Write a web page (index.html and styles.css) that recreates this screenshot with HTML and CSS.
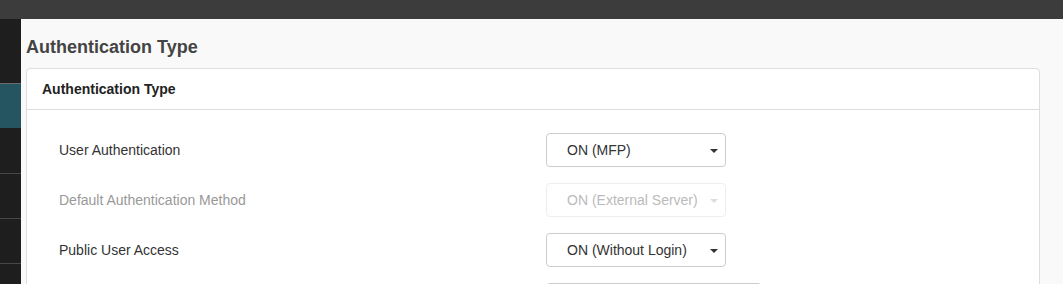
FILE: index.html
```html
<!DOCTYPE html>
<html lang="en">

<head>
    <meta charset="UTF-8">
    <title>Authentication Type</title>
    <link rel="stylesheet" href="styles.css">
</head>

<body>
    <header class="top-bar"></header>
    <div class="layout">
        <nav class="side-nav">
            <div class="nav-item active"></div>
            <div class="nav-item"></div>
            <div class="nav-item"></div>
            <div class="nav-item"></div>
            <div class="nav-item"></div>
        </nav>
        <main class="content">
            <h1 class="page-title">Authentication Type</h1>
            <section class="panel">
                <div class="panel-heading">Authentication Type</div>
                <div class="panel-body">
                    <div class="form-row">
                        <label class="form-label">User Authentication</label>
                        <div class="select">ON (MFP)<span class="caret"></span></div>
                    </div>
                    <div class="form-row disabled">
                        <label class="form-label">Default Authentication Method</label>
                        <div class="select">ON (External Server)<span class="caret"></span></div>
                    </div>
                    <div class="form-row">
                        <label class="form-label">Public User Access</label>
                        <div class="select">ON (Without Login)<span class="caret"></span></div>
                    </div>
                    <div class="form-row">
                        <label class="form-label"></label>
                        <div class="select wide"></div>
                    </div>
                </div>
            </section>
        </main>
    </div>
</body>

</html>
```

FILE: styles.css
```css
html,
body {
    margin: 0;
    padding: 0;
    height: 100%;
    overflow: hidden;
    font-family: 'Liberation Sans', Arial, sans-serif;
    background: #f9f9f9;
}

.top-bar {
    height: 19px;
    background: #3c3c3c;
}

.layout {
    display: flex;
    height: calc(100% - 19px);
}

.side-nav {
    width: 21px;
    flex-shrink: 0;
    background: #1e1e1e;
    padding-top: 64px;
}

.nav-item {
    height: 44px;
    border-top: 1px solid #474747;
}

.nav-item.active {
    background: #245560;
    border-top-color: #6b6b6b;
}

.nav-item.active + .nav-item {
    border-top-color: #1e1e1e;
}

.content {
    flex: 1;
    padding: 0 23px 0 5px;
}

.page-title {
    margin: 18px 0 10px;
    font-size: 18px;
    line-height: 21px;
    color: #444;
}

.panel {
    background: #fff;
    border: 1px solid #ddd;
    border-radius: 4px;
}

.panel-heading {
    height: 40px;
    padding: 0 15px;
    display: flex;
    align-items: center;
    border-bottom: 1px solid #ddd;
    font-size: 14px;
    font-weight: bold;
    color: #222;
}

.panel-body {
    padding: 23px 32px 0;
    display: flex;
    flex-direction: column;
    gap: 16px;
}

.form-row {
    display: grid;
    grid-template-columns: 487px auto;
    align-items: center;
}

.form-label {
    font-size: 14px;
    color: #333;
}

.select {
    box-sizing: border-box;
    width: 180px;
    height: 34px;
    padding: 0 20px;
    display: flex;
    align-items: center;
    border: 1px solid #ccc;
    border-radius: 4px;
    font-size: 14px;
    color: #333;
    position: relative;
}

.select.wide {
    width: 216px;
}

.caret {
    position: absolute;
    right: 7px;
    top: 15px;
    width: 0;
    height: 0;
    border-left: 4px solid transparent;
    border-right: 4px solid transparent;
    border-top: 4px solid #333;
}

.form-row.disabled .form-label {
    color: #999;
}

.form-row.disabled .select {
    color: #bbb;
    border-color: #eee;
}

.form-row.disabled .caret {
    border-top-color: #ddd;
}
```
